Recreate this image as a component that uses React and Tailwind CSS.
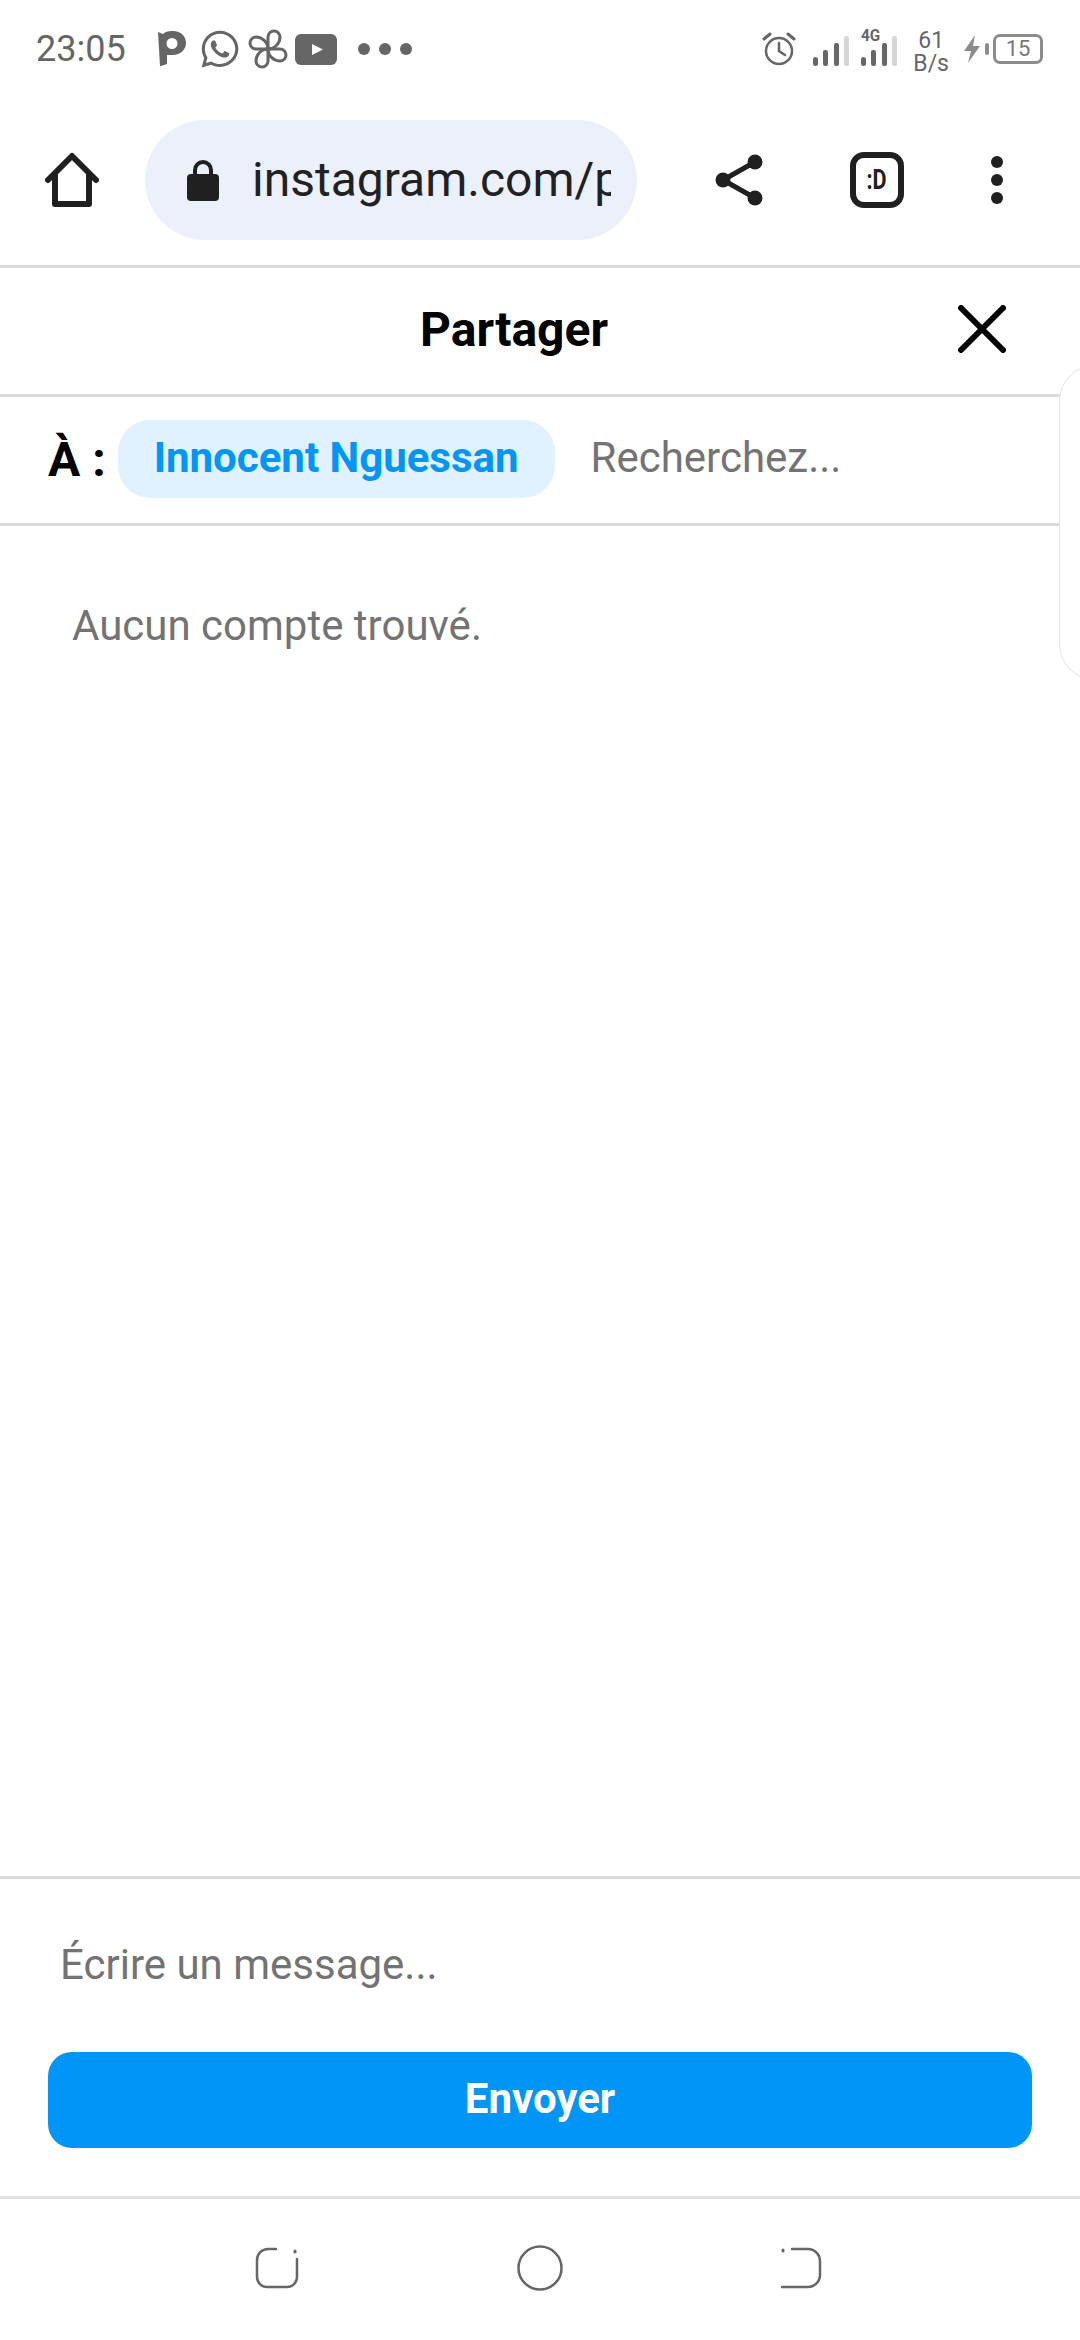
import { FaWhatsapp } from 'react-icons/fa';

const font = "font-['Roboto','Liberation_Sans',sans-serif]";

// Notification glyphs on the left of the status bar
function PinIcon() {
  return (
    <svg width="28" height="36" viewBox="0 0 28 36" className="mr-[13px]">
      <path fill="#666" fillRule="evenodd" d="M0 1 L5 3 C8 0 12 0 15 0 C23 0 28 5 28 12 C28 19 22 24 15 24 L9 24 L9 33 L3 35 L2 35 Z M14 7 A5.5 5.5 0 1 0 14.01 18 A5.5 5.5 0 1 0 14 7 Z" />
    </svg>
  );
}

function PinwheelIcon() {
  const petal = 'M20 20 L20 8 A6 6 0 0 1 32 8 C32 14 27 20 20 20 Z';
  return (
    <svg width="40" height="40" viewBox="0 0 40 40" fill="none" stroke="#666" strokeWidth="3" strokeLinejoin="round" className="ml-[7px]">
      <path d={petal} />
      <path d={petal} transform="rotate(90 20 20)" />
      <path d={petal} transform="rotate(180 20 20)" />
      <path d={petal} transform="rotate(270 20 20)" />
    </svg>
  );
}

function TubeIcon() {
  return (
    <svg width="42" height="31" viewBox="0 0 42 31" className="ml-[7px]">
      <rect width="42" height="31" rx="6" fill="#666" />
      <path d="M17 10 L28 15.5 L17 21 Z" fill="#fff" />
    </svg>
  );
}

function AlarmIcon() {
  return (
    <svg width="34" height="34" viewBox="0 0 34 34" fill="none" stroke="#666" strokeWidth="2.5" strokeLinecap="round">
      <circle cx="17" cy="19" r="13" />
      <path d="M17 11 V19 L23 23" />
      <path d="M2 7 L8 2" strokeWidth="3" />
      <path d="M32 7 L26 2" strokeWidth="3" />
    </svg>
  );
}

function SignalBars() {
  return (
    <svg width="36" height="30" viewBox="0 0 36 30">
      <rect x="0" y="21" width="5" height="9" rx="2.5" fill="#666" />
      <rect x="10" y="14" width="5" height="16" rx="2" fill="#666" />
      <rect x="21" y="7" width="5" height="23" rx="2" fill="#666" />
      <rect x="31" y="0" width="5" height="30" rx="2" fill="#d6d6d6" />
    </svg>
  );
}

function StatusBar() {
  return (
    <div className="h-[100px] flex items-start justify-between pl-[36px] pr-[37px] pt-[29px] shrink-0">
      <div className="flex items-center h-[40px]">
        <span className="text-[36px] leading-none text-[#666] mr-[32px]">23:05</span>
        <PinIcon />
        <FaWhatsapp size={42} color="#666" />
        <PinwheelIcon />
        <TubeIcon />
        <div className="flex gap-[9px] ml-[21px]">
          <span className="w-[12px] h-[12px] rounded-full bg-[#666]" />
          <span className="w-[12px] h-[12px] rounded-full bg-[#666]" />
          <span className="w-[12px] h-[12px] rounded-full bg-[#666]" />
        </div>
      </div>
      <div className="flex items-center h-[40px]">
        <AlarmIcon />
        <div className="ml-[17px] mt-[4px]"><SignalBars /></div>
        <div className="relative ml-[12px] mt-[4px]">
          <span className="absolute -top-[9px] left-[0px] text-[17px] font-bold leading-none text-[#666] scale-x-90 origin-left">4G</span>
          <SignalBars />
        </div>
        <div className="flex flex-col items-center ml-[16px] mt-[6px] text-[#666] text-[23px] leading-[23px]">
          <span>61</span>
          <span>B/s</span>
        </div>
        <svg width="16" height="28" viewBox="0 0 16 28" className="ml-[15px]">
          <path d="M11 0 L0 16 L7 16 L4 28 L16 11 L9 11 Z" fill="#8c8c8c" />
        </svg>
        <span className="w-[4px] h-[12px] ml-[5px] mr-[4px] bg-[#8c8c8c] rounded-sm" />
        <div className="w-[50px] h-[30px] border-[3px] border-[#8c8c8c] rounded-[7px] flex items-center justify-center text-[22px] leading-none text-[#777]">15</div>
      </div>
    </div>
  );
}

function BrowserBar() {
  return (
    <div className="h-[165px] flex items-center shrink-0 pb-[5px]">
      <div className="w-[145px] flex justify-center shrink-0 pr-[2px]">
        <svg width="54" height="56" viewBox="0 0 54 56" fill="none" stroke="#202020" strokeWidth="6" strokeLinejoin="round" strokeLinecap="round">
          <path d="M3 28 L27 4 L51 28" />
          <path d="M10 23 V52 H44 V23" />
        </svg>
      </div>
      <div className="w-[492px] h-[120px] rounded-[60px] bg-[#ebf0fa] flex items-center pl-[42px] pr-[26px] shrink-0">
        <svg width="32" height="42" viewBox="0 0 32 42" className="shrink-0">
          <path d="M8 18 V11 A8 8 0 0 1 24 11 V18" fill="none" stroke="#202020" strokeWidth="4" />
          <rect x="0" y="15" width="32" height="27" rx="4" fill="#202020" />
        </svg>
        <div className="ml-[33px] overflow-hidden whitespace-nowrap text-[48px] leading-none text-[#202124]">
          <div className="h-[58px] leading-[58px]">instagram.com/p</div>
        </div>
      </div>
      <div className="flex-1 flex items-center justify-between pl-[78px] pr-[77px]">
        <svg width="48" height="52" viewBox="0 0 48 52">
          <path d="M40 8 L8 26 L40 44" fill="none" stroke="#202020" strokeWidth="5" />
          <circle cx="8" cy="26" r="7.5" fill="#202020" />
          <circle cx="40" cy="8" r="7.5" fill="#202020" />
          <circle cx="40" cy="44" r="7.5" fill="#202020" />
        </svg>
        <div className="w-[54px] h-[56px] border-[6px] border-[#202020] rounded-[14px] flex items-center justify-center font-bold text-[27px] leading-none text-[#202020]">
          <span className="scale-x-80">:D</span>
        </div>
        <div className="flex flex-col gap-[6px]">
          <span className="w-[12px] h-[12px] rounded-full bg-[#202020]" />
          <span className="w-[12px] h-[12px] rounded-full bg-[#202020]" />
          <span className="w-[12px] h-[12px] rounded-full bg-[#202020]" />
        </div>
      </div>
    </div>
  );
}

function Divider() {
  return <div className="h-[3px] bg-[#dbdbdb] shrink-0" />;
}

// Android navigation keys
function NavBar() {
  return (
    <div className="h-[141px] shrink-0 flex items-center justify-center gap-[217px] pb-[4px] pr-[4px]">
      <svg width="46" height="42" viewBox="0 0 46 42" fill="none" stroke="#666" strokeWidth="2.5" strokeLinecap="round">
        <path d="M22 2 H14 A11 11 0 0 0 3 13 V30 A10 10 0 0 0 13 40 H33 A10 10 0 0 0 43 30 V12" />
        <path d="M41 4 V5" strokeWidth="3" />
      </svg>
      <svg width="46" height="46" viewBox="0 0 46 46" fill="none" stroke="#666" strokeWidth="2.5">
        <circle cx="23" cy="23" r="21.5" />
      </svg>
      <svg width="42" height="42" viewBox="0 0 42 42" fill="none" stroke="#666" strokeWidth="2.5" strokeLinecap="round">
        <path d="M12 2 H28 A12 12 0 0 1 40 14 V28 A12 12 0 0 1 28 40 H2" />
        <path d="M3 3 V4" strokeWidth="3" />
      </svg>
    </div>
  );
}

export default function App() {
  return (
    <div className={`${font} relative w-[1080px] h-[2340px] bg-white flex flex-col overflow-hidden`}>
      <StatusBar />
      <BrowserBar />
      <Divider />

      <div className="h-[126px] flex items-center justify-center relative shrink-0">
        <span className="text-[48px] font-bold text-black mr-[52px] pb-[3px]">Partager</span>
        <svg width="48" height="48" viewBox="0 0 48 48" className="absolute right-[74px] top-[37px]" fill="none" stroke="#000" strokeWidth="6" strokeLinecap="round">
          <path d="M3 3 L45 45 M45 3 L3 45" />
        </svg>
      </div>
      <Divider />

      <div className="h-[126px] flex items-center pl-[48px] shrink-0">
        <span className="text-[48px] font-bold text-black leading-none mr-[12px]">À :</span>
        <div className="h-[78px] px-[36px] rounded-[32px] bg-[#e0f1ff] flex items-center text-[42px] font-bold text-[#0095f6] pb-[4px] -mt-[2px]">Innocent Nguessan</div>
        <span className="ml-[36px] text-[42px] text-[#737373] pb-[5px]">Recherchez...</span>
      </div>
      <Divider />

      <div className="flex-1 px-[72px] pt-[76px] text-[42px] leading-[48px] text-[#737373]">Aucun compte trouvé.</div>

      <Divider />
      <div className="h-[173px] flex items-center pl-[60px] pb-[3px] text-[42px] text-[#737373] shrink-0">Écrire un message...</div>
      <div className="px-[48px] shrink-0">
        <div className="h-[96px] rounded-[24px] bg-[#0095f6] flex items-center justify-center text-[42px] font-bold text-white pb-[3px]">Envoyer</div>
      </div>
      <div className="h-[48px] shrink-0" />
      <div className="h-[3px] bg-[#e0e2df] shrink-0" />
      <NavBar />

      {/* edge panel handle */}
      <div className="absolute top-[365px] left-[1059px] w-[60px] h-[315px] bg-white border border-[#e2e2e2] rounded-l-[36px]" />
    </div>
  );
}
